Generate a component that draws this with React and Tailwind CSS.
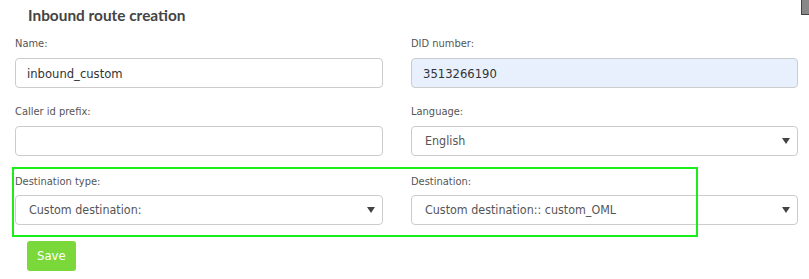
import React from "react";

const BODY_FONT = "'DejaVu Sans Condensed', Lato, 'Liberation Sans', sans-serif";

const Label = ({ children }) => (
  <label className="block text-[11px] leading-[14px] text-[#555]">{children}</label>
);

const TextInput = ({ value, autofill }) => (
  <input
    type="text"
    readOnly
    value={value}
    className={
      "block h-[30px] w-full rounded-[4px] border border-[#ccc] px-[11px] text-[12.9px] text-[#333] outline-none " +
      (autofill ? "bg-[#e8f0fe]" : "bg-white")
    }
  />
);

const SelectBox = ({ value }) => (
  <div className="flex h-[30px] w-full items-center justify-between rounded-[4px] border border-[#ccc] bg-white pl-[13px] pr-[7px] text-[12.4px] text-[#555]">
    <span>{value}</span>
    <svg width="8" height="6" viewBox="0 0 8 6">
      <path d="M0 0h8L4 6z" fill="#444" />
    </svg>
  </div>
);

export default function App() {
  return (
    <div
      className="relative h-[279px] w-[809px] overflow-hidden bg-white"
      style={{ fontFamily: BODY_FONT }}
    >
      <h3
        className="pl-[28px] pt-[4px] text-[15.4px] font-bold leading-[22px] text-[#444]"
        style={{ fontFamily: "Lato, 'Noto Sans', sans-serif" }}
      >
        Inbound route creation
      </h3>

      <div className="grid grid-cols-[368px_387px] gap-x-[28px] pl-[15px] pt-[11px]">
        <div>
          <Label>Name:</Label>
          <div className="mt-[7px]">
            <TextInput value="inbound_custom" />
          </div>
        </div>
        <div>
          <Label>DID number:</Label>
          <div className="mt-[7px]">
            <TextInput value="3513266190" autofill />
          </div>
        </div>

        <div className="mt-[17px]">
          <Label>Caller id prefix:</Label>
          <div className="mt-[7px]">
            <TextInput value="" />
          </div>
        </div>
        <div className="mt-[17px]">
          <Label>Language:</Label>
          <div className="mt-[7px]">
            <SelectBox value="English" />
          </div>
        </div>

        <div className="mt-[19px]">
          <Label>Destination type:</Label>
          <div className="mt-[6px]">
            <SelectBox value="Custom destination:" />
          </div>
        </div>
        <div className="mt-[19px]">
          <Label>Destination:</Label>
          <div className="mt-[6px]">
            <SelectBox value="Custom destination:: custom_OML" />
          </div>
        </div>
      </div>

      <div className="pl-[27px] pt-[16px]">
        <button className="h-[30px] rounded-[3px] bg-[#7bd83a] px-[10px] text-[13px] text-white">
          Save
        </button>
      </div>

      {/* highlight frame */}
      <div className="absolute left-[12px] top-[167px] h-[70px] w-[686px] border-2 border-[#1aee1a]" />

      {/* corner widget */}
      <div className="absolute right-0 top-0 h-[15px] w-[8px] border-b border-l border-[#444] bg-[#888]" />
    </div>
  );
}
